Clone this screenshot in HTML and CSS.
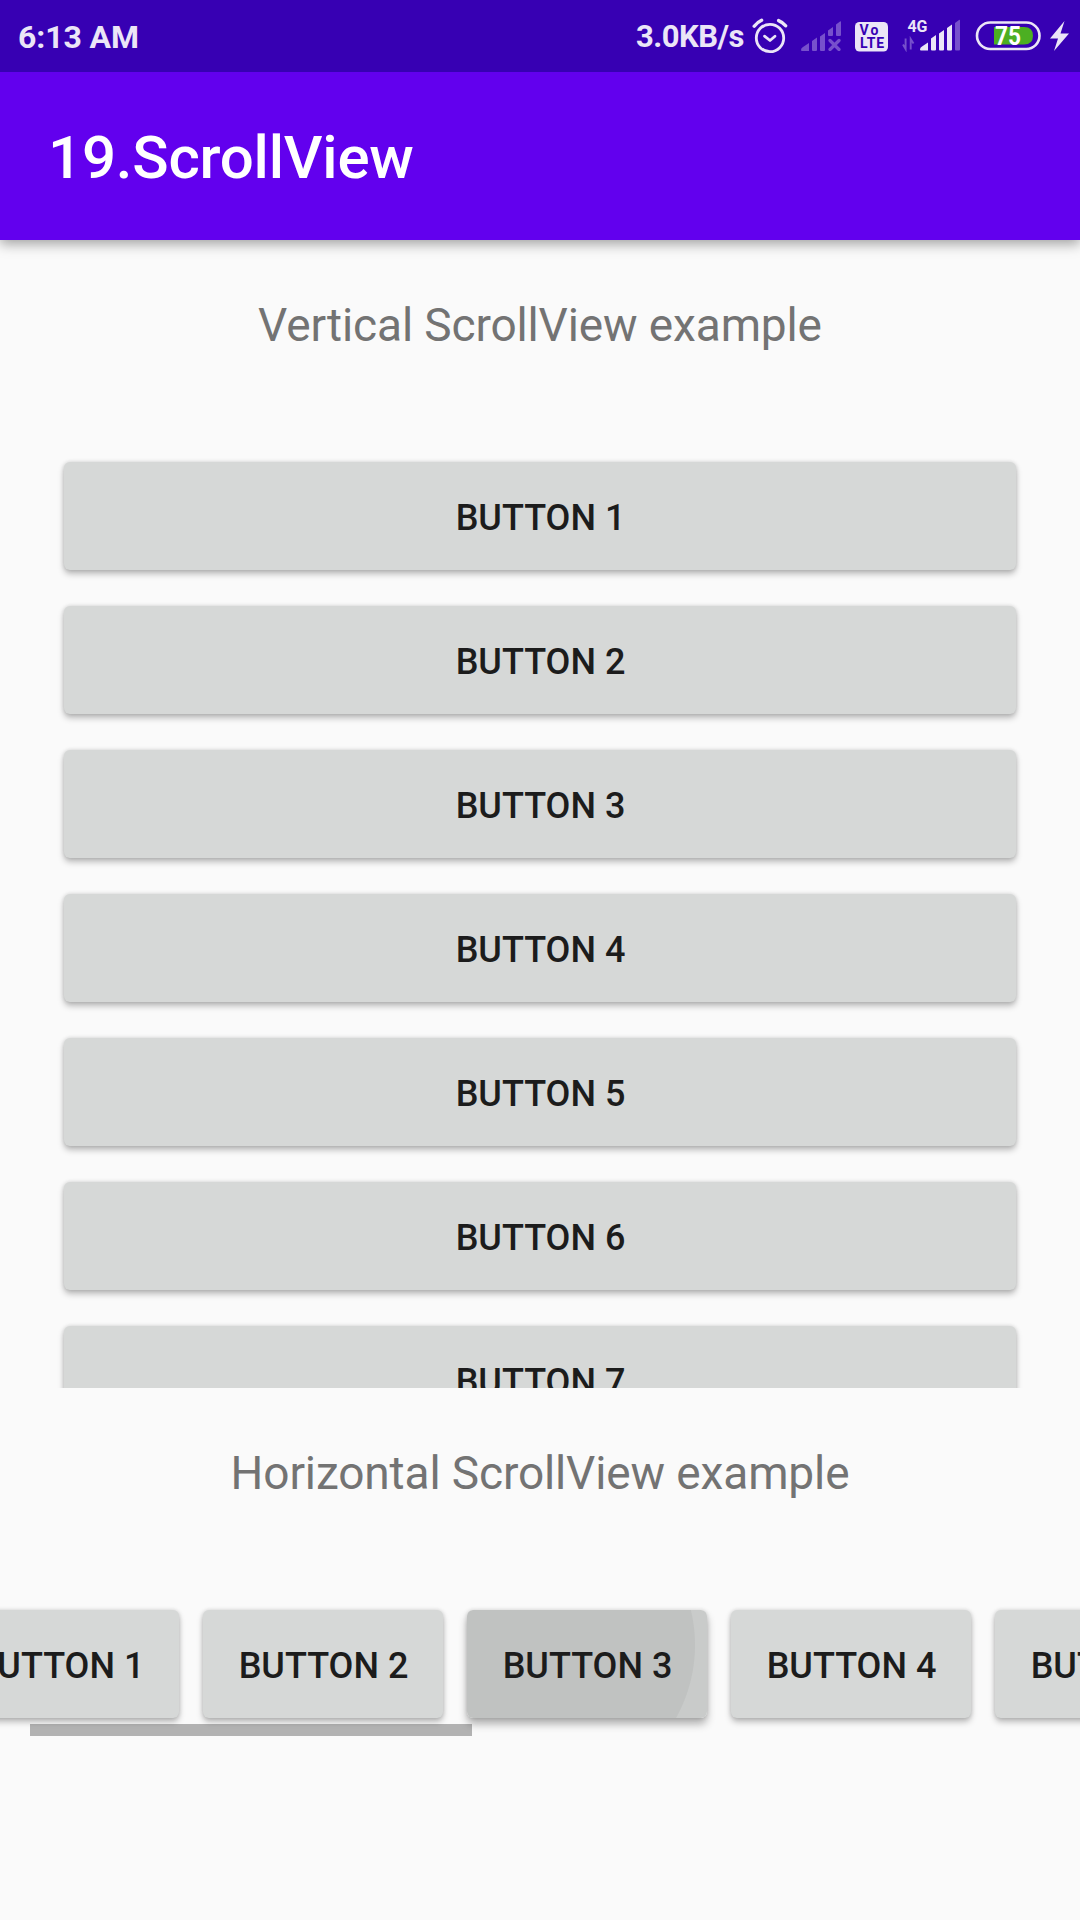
FILE: index.html
```html
<!DOCTYPE html>
<html lang="en">
<head>
<meta charset="utf-8">
<title>19.ScrollView</title>
<link rel="stylesheet" href="styles.css">
</head>
<body>
<div class="screen">
  <div class="status">
    <span class="clock">6:13 AM</span>
    <div class="tray">
      <span class="speed">3.0KB/s</span>
      <svg class="alarm" width="36" height="36" viewBox="0 0 36 36" fill="none" stroke="#ebe5f7" stroke-linecap="round" stroke-linejoin="round">
        <circle cx="18" cy="20" r="13.700" stroke-width="2.800"/>
        <path d="M12.500 18.200l5.500 4.300 5-4.300" stroke-width="2.800"/>
        <path d="M2.200 8.200q3-4 7.400-6M26.600 2.600q4.200 1.600 7 5.200" stroke-width="3.400"/>
      </svg>
      <svg class="nosim" width="40" height="30" viewBox="0 0 40 30" fill="#7750cc">
        <path d="M0 29q0-2 2-3l6-4v8H1q-1 0-1-1zM11 20l5-3.500v12.500q0 1-1 1h-3q-1 0-1-1zM19 15.500l5-3.500v17q0 1-1 1h-3q-1 0-1-1zM27 9.500l5-3.500v8q0 1-1 1h-3q-1 0-1-1zM35 3.500l4-3q1-.5 1 .5v13q0 1-1 1h-3q-1 0-1-1z"/>
        <path d="M29 19.500l9 9M38 19.500l-9 9" stroke="#7750cc" stroke-width="3.200" stroke-linecap="round"/>
      </svg>
      <svg class="volte" width="33" height="30" viewBox="0 0 33 30">
        <rect width="33" height="29.500" rx="4.500" fill="#ebe5f7"/>
        <text class="volte-text" x="4.500" y="13.300" textLength="19">Vo</text>
        <text class="volte-text" x="5" y="26" textLength="24">LTE</text>
      </svg>
      <svg class="mobile" width="58" height="34" viewBox="0 0 58 34" fill="#ebe5f7">
        <text class="net-text" x="5.500" y="13.500" textLength="20">4G</text>
        <path d="M1 26.500l2.600 4.500V20.500M11.500 25.500L8.700 21v10.500" fill="none" stroke="#7750cc" stroke-width="1.900"/>
        <path d="M18 31.500q0-2 2-3l6-4v8h-7q-1 0-1-1zM29 20.500l5-3.500v14.500q0 1-1 1h-3q-1 0-1-1zM37 15.500l5-3.500v19.500q0 1-1 1h-3q-1 0-1-1zM45 10l5-3.500v25q0 1-1 1h-3q-1 0-1-1z"/>
        <path d="M53 5l4-3q1-.5 1 .5v29q0 1-1 1h-3q-1 0-1-1z" fill="#7750cc"/>
      </svg>
      <svg class="battery" width="66" height="30" viewBox="0 0 66 30">
        <rect x="2" y="1.500" width="62.500" height="26.500" rx="13.200" fill="none" stroke="#ebe5f7" stroke-width="2.600"/>
        <path d="M19 6h30q9 0 9 8.700t-9 8.800H19z" fill="#4caf22"/>
        <text class="charge-text" x="20" y="23.900" textLength="26" lengthAdjust="spacingAndGlyphs">75</text>
      </svg>
      <svg class="bolt" width="19" height="30" viewBox="0 0 19 30" fill="#ebe5f7">
        <path d="M14.500 0L0 17.500h8L4 30 19 12.500h-8.500z"/>
      </svg>
    </div>
  </div>
  <header class="appbar"><h1 class="title">19.ScrollView</h1></header>
  <main class="content">
    <h2 class="heading">Vertical ScrollView example</h2>
    <div class="vertical">
      <button class="btn">BUTTON 1</button>
      <button class="btn">BUTTON 2</button>
      <button class="btn">BUTTON 3</button>
      <button class="btn">BUTTON 4</button>
      <button class="btn">BUTTON 5</button>
      <button class="btn">BUTTON 6</button>
      <button class="btn">BUTTON 7</button>
    </div>
    <h2 class="heading">Horizontal ScrollView example</h2>
    <div class="horizontal">
      <button class="btn">BUTTON 1</button>
      <button class="btn">BUTTON 2</button>
      <button class="btn pressed">BUTTON 3</button>
      <button class="btn">BUTTON 4</button>
      <button class="btn">BUTTON 5</button>
      <div class="scrollbar"></div>
    </div>
  </main>
</div>
</body>
</html>
```
FILE: styles.css
```css
* {
  box-sizing: border-box;
}

body {
  margin: 0;
  font-family: Roboto, "Liberation Sans", sans-serif;
}

.screen {
  display: flex;
  flex-direction: column;
  width: 1080px;
  height: 1920px;
  overflow: hidden;
  background: #fafafa;
}

.status {
  z-index: 2;
  display: flex;
  justify-content: space-between;
  height: 72px;
  padding: 0 11px 0 18px;
  background: #3700b3;
  color: #ebe5f7;
  font-size: 31px;
  font-weight: 700;
  line-height: 74px;
}

.clock {
  font-size: 32px;
  letter-spacing: -0.1px;
}

.tray {
  display: flex;
}

.speed {
  letter-spacing: -0.5px;
}

.alarm {
  margin: 18px 0 0 8px;
}

.nosim {
  margin: 21px 0 0 13px;
}

.volte {
  margin: 22px 0 0 14px;
}

.mobile {
  margin: 18px 0 0 14px;
}

.battery {
  margin: 21px 0 0 15px;
}

.bolt {
  margin: 21px 0 0 9px;
}

.volte-text {
  fill: #3700b3;
  font-size: 14px;
  font-weight: 700;
}

.net-text {
  font-size: 16px;
  font-weight: 700;
}

.charge-text {
  fill: #fff;
  font-size: 25px;
  font-weight: 700;
}

.appbar {
  z-index: 1;
  display: flex;
  align-items: center;
  height: 168px;
  padding: 2px 48px 0;
  background: #6200ee;
  box-shadow: 0 4px 12px rgba(0, 0, 0, 0.36);
}

.title {
  margin: 0;
  color: #fff;
  font-size: 60px;
  font-weight: 500;
  letter-spacing: -0.2px;
}

.content {
  display: flex;
  flex-direction: column;
}

.heading {
  height: 170px;
  margin: 0;
  color: #737373;
  font-size: 46px;
  font-weight: 400;
  letter-spacing: -0.13px;
  line-height: 170px;
  text-align: center;
}

.vertical {
  display: flex;
  flex-direction: column;
  gap: 36px;
  height: 978px;
  padding: 52px 64px 0;
  overflow: hidden;
}

.btn {
  flex: none;
  height: 108px;
  padding: 0 0 0 1px;
  border: 0;
  border-radius: 6px;
  background: #d6d8d7;
  box-shadow: 0 4px 6px rgba(0, 0, 0, 0.25), 0 0 4px rgba(0, 0, 0, 0.15);
  color: #1c1c1c;
  font-family: inherit;
  font-size: 36px;
  font-weight: 500;
  line-height: 112px;
}

.horizontal {
  position: relative;
  display: flex;
  gap: 24px;
  height: 178px;
  padding-top: 52px;
  margin-left: -61px;
}

.horizontal .btn {
  width: 240px;
}

.horizontal .pressed {
  background: radial-gradient(circle 160px at 78px 35px, #c0c2c1 149.500px, #c9cbca 150.500px);
  box-shadow: 0 6px 9px rgba(0, 0, 0, 0.3), 0 0 4px rgba(0, 0, 0, 0.15);
}

.scrollbar {
  position: absolute;
  left: 91px;
  bottom: 0;
  width: 442px;
  height: 12px;
  background: rgba(0, 0, 0, 0.285);
}
```
